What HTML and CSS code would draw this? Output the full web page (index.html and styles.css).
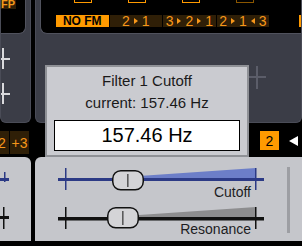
FILE: index.html
```html
<!DOCTYPE html>
<html lang="en">
<head>
    <meta charset="UTF-8">
    <title>Filter 1 Cutoff</title>
    <link rel="stylesheet" href="styles.css">
</head>
<body>
    <div class="screen">
        <div class="col col-left">
            <div class="panel-dark">
                <div class="display display-left">
                    <span class="fp">FP</span>
                </div>
                <svg class="plus-stack" width="30" height="80" viewBox="0 0 30 80">
                    <rect x="0" y="24" width="9" height="2" fill="#d9d9dc"/>
                    <rect x="1" y="14" width="2" height="21" fill="#d9d9dc"/>
                    <rect x="0" y="59" width="9" height="2" fill="#d9d9dc"/>
                    <rect x="1" y="49" width="2" height="21" fill="#d9d9dc"/>
                </svg>
            </div>
            <div class="strip strip-left">
                <span class="tab tab-cut">2</span>
                <span class="tab">+3</span>
            </div>
            <div class="panel-light panel-light-left">
                <svg width="30" height="84" viewBox="0 0 30 84">
                    <rect x="0" y="21" width="9" height="3" fill="#2c3a85"/>
                    <rect x="4" y="15" width="1.5" height="10" fill="#2c3a85"/>
                    <rect x="0" y="59" width="9" height="3" fill="#111"/>
                    <rect x="3" y="50" width="1.5" height="22" fill="#111"/>
                </svg>
            </div>
        </div>

        <div class="col col-main">
            <div class="panel-dark">
                <div class="display display-main">
                    <div class="icon-row">
                        <span class="icon-slot"><span class="icon"></span></span>
                        <span class="icon-slot"><span class="icon"></span></span>
                        <span class="icon-slot"><span class="icon"></span></span>
                        <span class="icon-slot"><span class="icon icon-dim"></span></span>
                    </div>
                    <div class="mode-row">
                        <span class="mode mode-on">NO FM</span>
                        <span class="mode">2<i class="tri"></i>1</span>
                        <span class="mode">3<i class="tri"></i>2<i class="tri"></i>1</span>
                        <span class="mode">2<i class="tri"></i>1<i class="tri tri-left"></i>3</span>
                        <span class="mode mode-edge"></span>
                    </div>
                </div>
                <svg class="plus-faint" width="20" height="26" viewBox="0 0 20 26">
                    <rect x="0" y="10" width="18" height="2" fill="#5b5d69"/>
                    <rect x="8" y="0" width="2" height="23" fill="#5b5d69"/>
                </svg>
            </div>
            <div class="strip strip-main">
                <span class="tab tab-on">2</span>
                <svg class="back" width="9" height="10" viewBox="0 0 9 10">
                    <polygon points="9,0 9,10 0,5" fill="#fff"/>
                </svg>
            </div>
            <div class="panel-light panel-light-main">
                <div class="sliders">
                    <svg width="240" height="24" viewBox="0 0 240 24">
                        <polygon points="31,13 221,0 221,13" fill="#6c7ec8"/>
                        <rect x="23" y="10" width="206" height="3" fill="#2c3a85"/>
                        <rect x="30" y="0" width="1.5" height="22" fill="#2c3a85"/>
                        <rect x="220" y="0" width="1.5" height="22" fill="#2c3a85"/>
                        <rect x="77.75" y="2.75" width="30.5" height="19" rx="8" fill="#d4d4d7" stroke="#111" stroke-width="1.5"/>
                        <rect x="92.25" y="6" width="1.2" height="13" fill="#333"/>
                    </svg>
                    <div class="slider-label">Cutoff</div>
                    <svg class="slider-two" width="240" height="24" viewBox="0 0 240 24">
                        <polygon points="31,14 221,1 221,14" fill="#8d8d8f"/>
                        <rect x="23" y="11" width="206" height="3.5" fill="#111"/>
                        <rect x="30" y="1" width="1.5" height="22" fill="#111"/>
                        <rect x="220" y="1" width="1.5" height="22" fill="#111"/>
                        <rect x="72.75" y="1.75" width="30.5" height="20" rx="8" fill="#d4d4d7" stroke="#111" stroke-width="1.5"/>
                        <rect x="87.25" y="5" width="1.2" height="14" fill="#333"/>
                    </svg>
                    <div class="slider-label slider-label-two">Resonance</div>
                </div>
                <div class="scrollbar"></div>
            </div>
        </div>

        <div class="popup">
            <div class="popup-line">Filter 1 Cutoff</div>
            <div class="popup-line">current: 157.46 Hz</div>
            <div class="popup-value">157.46 Hz</div>
        </div>
    </div>
</body>
</html>
```

FILE: styles.css
```css
* {
    margin: 0;
    padding: 0;
    box-sizing: border-box;
}

body {
    background: #000;
    width: 302px;
    height: 246px;
    overflow: hidden;
    font-family: 'Liberation Sans', Arial, sans-serif;
}

.screen {
    position: relative;
    display: grid;
    grid-template-columns: 31px 267px;
    column-gap: 4px;
    height: 246px;
    overflow: hidden;
}

.col {
    display: flex;
    flex-direction: column;
    min-width: 0;
}

/* dark upper panels */
.panel-dark {
    height: 123px;
    background: #3b3d47;
    border: 1px solid #4a4c57;
    border-top: none;
    border-radius: 0 0 6px 6px;
    overflow: hidden;
}

.display {
    height: 34px;
    background: #000;
    border-bottom: 1px solid #50525d;
}

.display-left {
    margin-right: 4px;
    border-right: 1px solid #50525d;
    border-radius: 0 0 7px 0;
}

.fp {
    display: block;
    width: 15px;
    height: 9px;
    background: #2f1f07;
    color: #f39a1c;
    font-size: 11px;
    font-weight: bold;
    line-height: 8px;
    overflow: hidden;
}

.plus-stack {
    display: block;
}

.display-main {
    margin-left: 4px;
    margin-right: -10px;
    padding-left: 15px;
    border-left: 1px solid #50525d;
    border-radius: 0 0 0 7px;
}

.icon-row {
    display: flex;
    gap: 1px;
    height: 4px;
}

.icon-slot {
    width: 53px;
    display: flex;
    justify-content: center;
}

.icon {
    width: 18px;
    height: 14px;
    margin-top: -11px;
    border: 1px solid #ff9a00;
}

.icon-dim {
    border-color: #8a5600;
}

.mode-row {
    display: flex;
    gap: 1px;
    margin-top: 11px;
}

.mode {
    width: 53px;
    height: 12px;
    display: flex;
    align-items: center;
    justify-content: center;
    background: #2f1f07;
    color: #f7971a;
    font-size: 14px;
    line-height: 12px;
}

.mode-on {
    background: #ff9a00;
    color: #000;
    font-size: 12px;
    font-weight: bold;
}

.mode-edge {
    width: 12px;
    margin-left: 29px;
    background: #ff9a00;
}

.tri {
    width: 0;
    height: 0;
    margin: 0 4px;
    border-left: 4px solid #f7971a;
    border-top: 3.5px solid transparent;
    border-bottom: 3.5px solid transparent;
}

.tri-left {
    border-left: none;
    border-right: 4px solid #f7971a;
}

.plus-faint {
    display: block;
    margin: 32px 0 0 212px;
}

/* tab strip */
.strip {
    height: 34px;
    display: flex;
    align-items: flex-start;
}

.strip-left {
    padding-top: 8px;
    gap: 1px;
}

.tab {
    height: 23px;
    display: flex;
    align-items: center;
    justify-content: center;
    background: #2f1f07;
    color: #f7971a;
    font-size: 14px;
}

.tab-cut {
    width: 14px;
    margin-left: -5px;
}

.tab:not(.tab-cut) {
    width: 19px;
}

.strip-main {
    justify-content: flex-end;
    align-items: center;
    padding: 1px 4px 0 0;
}

.tab-on {
    width: 19px;
    height: 19px;
    background: #ff9a00;
    color: #000;
    font-size: 14px;
}

.back {
    margin-left: 10px;
}

/* light lower panels */
.panel-light {
    height: 84px;
    background: #c5c6cb;
}

.panel-light-left {
    border-radius: 0 6px 0 0;
}

.panel-light-main {
    display: flex;
    border-radius: 6px 0 0 0;
    padding-top: 11px;
}

.sliders {
    width: 240px;
}

.sliders svg {
    display: block;
}

.slider-label {
    width: 216px;
    margin-top: -7px;
    text-align: right;
    font-size: 14px;
    line-height: 14px;
    color: #1d1d1f;
}

.slider-two {
    margin-top: 7px;
}

.slider-label-two {
    margin-top: -8px;
}

.scrollbar {
    width: 3px;
    height: 66px;
    margin: -1px 0 0 12px;
    background: #9d9ea3;
}

/* value popup */
.popup {
    position: absolute;
    left: 45px;
    top: 65px;
    width: 204px;
    height: 92px;
    padding-top: 3px;
    background: #cacbd0;
    border: 2px solid #8f9196;
    text-align: center;
    color: #1a1a1a;
}

.popup-line {
    font-size: 15px;
    line-height: 22px;
}

.popup-value {
    height: 31px;
    margin: 6px 7px 0;
    background: #fff;
    border: 1px solid #000;
    color: #000;
    font-size: 20px;
    line-height: 29px;
}
```
